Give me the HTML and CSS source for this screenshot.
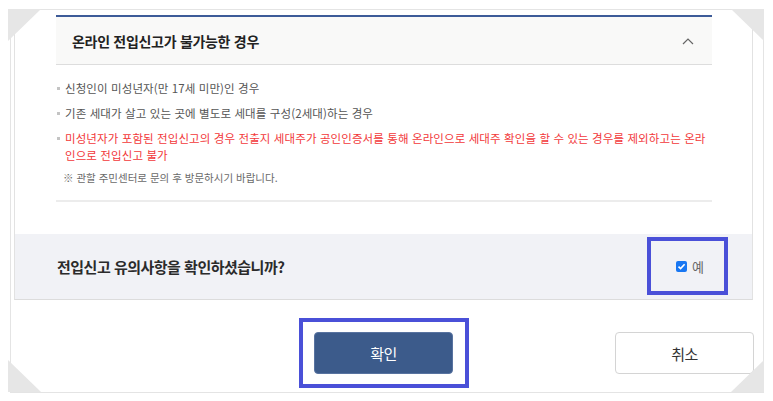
FILE: index.html
```html
<!DOCTYPE html>
<html lang="ko">
<head>
<meta charset="utf-8">
<title>전입신고</title>
<link rel="stylesheet" href="styles.css">
</head>
<body>
<div class="frame">
  <div class="panel">
    <section class="acc">
      <div class="acc-head">
        <h3 class="acc-title">온라인 전입신고가 불가능한 경우</h3>
        <svg class="chev" width="12" height="8" viewBox="0 0 12 8"><polyline points="1,7 6,2 11,7" fill="none" stroke="#666" stroke-width="1.2"/></svg>
      </div>
      <div class="acc-body">
        <ul class="list">
          <li>신청인이 미성년자(만 17세 미만)인 경우</li>
          <li>기존 세대가 살고 있는 곳에 별도로 세대를 구성(2세대)하는 경우</li>
          <li class="red">미성년자가 포함된 전입신고의 경우 전출지 세대주가 공인인증서를 통해 온라인으로 세대주 확인을 할 수 있는 경우를 제외하고는 온라인으로 전입신고 불가</li>
        </ul>
        <p class="note">※ 관할 주민센터로 문의 후 방문하시기 바랍니다.</p>
      </div>
    </section>
    <div class="confirm-bar">
      <span class="question">전입신고 유의사항을 확인하셨습니까?</span>
      <label class="yes">
        <svg class="cb" width="11" height="11" viewBox="0 0 11 11"><rect x="0" y="0" width="11" height="11" rx="2" fill="#1877f2"/><polyline points="2.5,5.6 4.6,7.6 8.6,3.3" fill="none" stroke="#fff" stroke-width="1.6"/></svg>
        <span class="yes-text">예</span>
        <span class="annot annot-yes"></span>
      </label>
    </div>
  </div>
  <div class="actions">
    <span></span>
    <button class="btn btn-primary">확인<span class="annot annot-btn"></span></button>
    <button class="btn btn-cancel">취소</button>
  </div>
</div>
<span class="corner c-tl"></span>
<span class="corner c-tr"></span>
<span class="corner c-bl"></span>
<span class="corner c-br"></span>
</body>
</html>
```
FILE: styles.css
```css
html, body {
  margin: 0;
  padding: 0;
  background: #fff;
}
body {
  position: relative;
  width: 773px;
  height: 401px;
  overflow: hidden;
  font-family: "Noto Sans CJK KR", "Noto Sans", sans-serif;
  color: #333;
}
.frame {
  box-sizing: border-box;
  margin: 9px 0 0 10px;
  width: 754px;
  height: 384px;
  border: 1px solid #e4e4e4;
  display: flex;
  flex-direction: column;
}
.panel {
  margin: 0 10px 0 3px;
  padding-top: 5px;
  border-left: 1px solid #e2e2e2;
  border-right: 1px solid #e2e2e2;
  border-bottom: 1px solid #dcdcdc;
}
.acc {
  margin: 0 40px 0 41px;
}
.acc-head {
  height: 47px;
  border-top: 2px solid #3d5b98;
  border-bottom: 1px solid #dddddd;
  background: #f9f9f8;
  display: flex;
  align-items: center;
  justify-content: space-between;
  padding: 0 18px 0 16px;
}
.acc-title {
  margin: 0;
  font-size: 14px;
  font-weight: 700;
  letter-spacing: -0.3px;
  color: #222;
}
.chev {
  display: block;
}
.acc-body {
  padding: 15px 0 14px;
  border-bottom: 2px solid #ececec;
}
.list {
  list-style: none;
  margin: 0;
  padding: 0;
}
.list li {
  display: flex;
  font-size: 11.5px;
  line-height: 17px;
  letter-spacing: 0.1px;
  color: #555;
}
.list li + li {
  margin-top: 8px;
}
.list li::before {
  content: "";
  flex-shrink: 0;
  width: 3px;
  height: 3px;
  margin: 7px 5px 0 1px;
  background: #c4c4c4;
}
.list li.red {
  color: #f2383a;
}
.note {
  margin: 5px 0 0 7px;
  font-size: 10.5px;
  line-height: 17px;
  color: #6a6a6a;
}
.confirm-bar {
  margin-top: 32px;
  height: 65px;
  background: #f1f2f6;
  display: flex;
  align-items: center;
  justify-content: space-between;
  padding: 0 48px 0 42px;
}
.question {
  font-size: 15px;
  font-weight: 700;
  letter-spacing: -0.5px;
  color: #2b2b2b;
}
.yes {
  position: relative;
  display: flex;
  align-items: center;
  height: 20px;
  gap: 5px;
}
.cb {
  display: block;
}
.yes-text {
  font-size: 13px;
  color: #666;
}
.annot {
  position: absolute;
  border: 4px solid #4a50d8;
  pointer-events: none;
}
.annot-yes {
  left: -29px;
  right: -24px;
  top: -20px;
  bottom: -18px;
}
.actions {
  margin: 0 10px 0 3px;
  padding-top: 32px;
  display: grid;
  grid-template-columns: 1fr auto 1fr;
  align-items: start;
}
.btn {
  box-sizing: border-box;
  width: 139px;
  height: 42px;
  font-family: "Noto Sans CJK KR", "Noto Sans", sans-serif;
  font-size: 15px;
  letter-spacing: -0.5px;
  border-radius: 4px;
  cursor: pointer;
}
.btn-primary {
  position: relative;
  background: #3c5b8b;
  border: 1px solid #5873a0;
  color: #fff;
}
.annot-btn {
  left: -16px;
  right: -17px;
  top: -15px;
  bottom: -15px;
}
.btn-cancel {
  justify-self: end;
  margin-right: -1px;
  background: #fff;
  border: 1px solid #d4d4d4;
  color: #333;
}
.corner {
  position: absolute;
  width: 33px;
  height: 32px;
  background: #e6e6e6;
}
.c-tl {
  left: 8px;
  top: 9px;
  clip-path: polygon(0 0, 100% 0, 0 100%);
}
.c-tr {
  left: 731px;
  top: 9px;
  clip-path: polygon(0 0, 100% 0, 100% 100%);
}
.c-bl {
  left: 8px;
  top: 360px;
  clip-path: polygon(0 0, 0 100%, 100% 100%);
}
.c-br {
  left: 731px;
  top: 360px;
  clip-path: polygon(100% 0, 100% 100%, 0 100%);
}
```
